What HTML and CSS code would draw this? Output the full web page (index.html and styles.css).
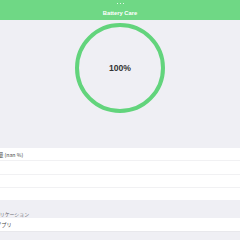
FILE: index.html
```html
<!DOCTYPE html>
<html>
<head>
<meta charset="utf-8">
<link rel="stylesheet" href="styles.css">
</head>
<body>
<div class="app">
  <header class="nav">
    <div class="dots"><span></span><span></span><span></span></div>
    <div class="title">Battery Care</div>
  </header>
  <section class="hero">
    <div class="ring"><span class="pct">100%</span></div>
  </section>
  <ul class="list">
    <li class="row"><span class="label first">バッテリー残量 (nan %)</span></li>
    <li class="row"></li>
    <li class="row"></li>
    <li class="row last"></li>
  </ul>
  <div class="section">アプリケーション</div>
  <ul class="list">
    <li class="row app-row"><span class="label apps">アプリ</span></li>
  </ul>
</div>
</body>
</html>
```

FILE: styles.css
```css
html, body {
  margin: 0;
  padding: 0;
}
body {
  background: #efeff4;
  width: 240px;
  height: 240px;
  overflow: hidden;
  font-family: "Liberation Sans", "Noto Sans CJK JP", sans-serif;
}
.app {
  width: 240px;
}
.nav {
  height: 20px;
  background: #6fd885;
  display: flex;
  flex-direction: column;
  align-items: center;
}
.dots {
  display: flex;
  gap: 2px;
  margin-top: 3px;
  height: 1px;
}
.dots span {
  width: 1px;
  height: 1px;
  background: rgba(255,255,255,0.8);
}
.title {
  margin-top: 6px;
  color: #fff;
  font-weight: bold;
  font-size: 5.8px;
  line-height: 7px;
}
.hero {
  height: 128px;
  display: flex;
  justify-content: center;
}
.ring {
  margin-top: 3px;
  width: 90px;
  height: 90px;
  box-sizing: border-box;
  border: 4px solid #62d47c;
  border-radius: 50%;
  display: flex;
  align-items: center;
  justify-content: center;
}
.pct {
  font-size: 8.6px;
  font-weight: bold;
  color: #333;
}
.list {
  list-style: none;
  margin: 0;
  padding: 0;
  background: #fff;
}
.row {
  height: 12.25px;
  border-bottom: 1px solid #f1f1f3;
  display: flex;
  align-items: center;
  overflow: hidden;
  font-family: "Noto Sans CJK JP", "Liberation Sans", sans-serif;
  font-size: 5.2px;
  color: #444;
  white-space: nowrap;
}
.row.last {
  border-bottom: none;
}
.label.first {
  margin-left: -33px;
}
.section {
  height: 18px;
  box-sizing: border-box;
  padding-top: 10px;
  font-family: "Noto Sans CJK JP", "Liberation Sans", sans-serif;
  font-size: 4.9px;
  color: #6d6d72;
  white-space: nowrap;
  text-indent: -10px;
  overflow: hidden;
}
.app-row {
  height: 13px;
  border-bottom: 1px solid #e8e8ec;
}
.label.apps {
  margin-left: -4px;
}
```
